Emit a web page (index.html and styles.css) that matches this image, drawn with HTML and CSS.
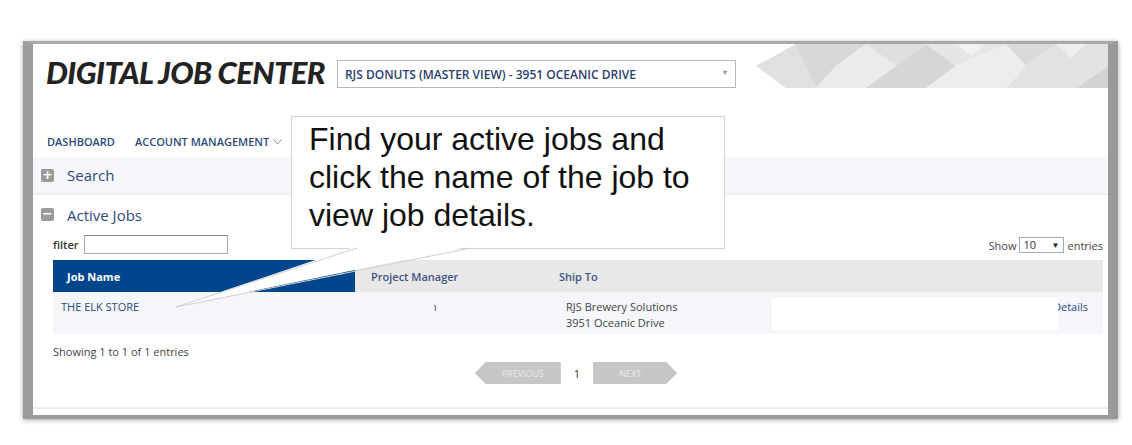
FILE: index.html
```html
<!DOCTYPE html>
<html lang="en">
<head>
  <meta charset="UTF-8">
  <title>Digital Job Center</title>
  <link rel="stylesheet" href="styles.css">
</head>
<body>
  <div class="frame">
    <header class="top">
      <h1 class="brand">DIGITAL JOB CENTER</h1>
      <div class="account-select">
        <span>RJS DONUTS (MASTER VIEW) - 3951 OCEANIC DRIVE</span>
        <span class="caret">&#9662;</span>
      </div>
      <svg class="pattern" width="352" height="44" viewBox="0 0 352 44">
        <polygon points="0,22 40,0 80,0 60,44 30,44" fill="#e0e0e0"/>
        <polygon points="40,0 110,0 80,22 60,44" fill="#d8d8d8"/>
        <polygon points="80,22 110,0 140,22 110,44 60,44" fill="#ebebeb"/>
        <polygon points="110,0 170,0 140,22" fill="#dedede"/>
        <polygon points="140,22 170,0 200,22 170,44 110,44" fill="#d6d6d6"/>
        <polygon points="170,0 250,0 200,22" fill="#e6e6e6"/>
        <polygon points="200,22 250,0 270,22 250,44 170,44" fill="#ededed"/>
        <polygon points="250,0 300,0 270,22" fill="#dadada"/>
        <polygon points="270,22 300,0 352,0 352,22 320,44 250,44" fill="#e2e2e2"/>
        <polygon points="320,44 352,22 352,44" fill="#d4d4d4"/>
        <polygon points="200,0 230,0 215,12" fill="#f1f1f1"/>
        <polygon points="300,0 330,0 315,14" fill="#efefef"/>
      </svg>
    </header>

    <nav class="menu">
      <a>DASHBOARD</a>
      <a>ACCOUNT MANAGEMENT
        <svg class="chev" width="9" height="6" viewBox="0 0 9 6"><polyline points="0.5,0.5 4.5,5 8.5,0.5" fill="none" stroke="#888" stroke-width="1"/></svg>
      </a>
    </nav>

    <div class="panel-bar search-bar">
      <span class="toggle">+</span>
      <span class="panel-title">Search</span>
    </div>

    <div class="panel-bar">
      <span class="toggle">&minus;</span>
      <span class="panel-title">Active Jobs</span>
    </div>

    <div class="jobs">
      <div class="tools">
        <label class="filter">filter <input type="text"></label>
        <div class="length">Show <span class="length-select">10 <span class="tri">&#9660;</span></span> entries</div>
      </div>

      <div class="table">
        <div class="th th-active">Job Name <span class="sort">&#8963;</span></div>
        <div class="th">Project Manager</div>
        <div class="th th-ship">Ship To</div>
        <div class="th"></div>

        <div class="td"><a class="job-link">THE ELK STORE</a></div>
        <div class="td td-pm">n</div>
        <div class="td td-ship">RJS Brewery Solutions<br>3951 Oceanic Drive</div>
        <div class="td td-details"><a>Details</a></div>
      </div>

      <div class="info">Showing 1 to 1 of 1 entries</div>

      <div class="pager">
        <span class="page-btn prev">PREVIOUS</span>
        <span class="page-num">1</span>
        <span class="page-btn next">NEXT</span>
      </div>
    </div>

    <div class="foot"></div>
  </div>

  <!-- redaction boxes and tutorial callout lie over the page -->
  <div class="redact redact-pm"></div>
  <div class="redact redact-row"></div>

  <div class="callout">Find your active jobs and<br>click the name of the job to<br>view job details.</div>
  <svg class="tail" width="1132" height="445" viewBox="0 0 1132 445">
    <polygon points="357,246 471,246 176,307" fill="#fff"/>
    <polyline points="357,248 176,307 471,248" fill="none" stroke="#cfcfcf" stroke-width="1"/>
  </svg>
</body>
</html>
```

FILE: styles.css
```css
* {
  box-sizing: border-box;
}

body {
  margin: 0;
  background: #fff;
  font-family: "Open Sans", Arial, sans-serif;
  color: #444;
  position: relative;
  width: 1132px;
  height: 445px;
  overflow: hidden;
}

a {
  color: #2c4a7a;
  text-decoration: none;
}

.frame {
  margin: 41px 0 0 23px;
  width: 1095px;
  height: 378px;
  border-style: solid;
  border-width: 3px 10px 4px 10px;
  border-color: #a9a9a9 #9a9a9a #9a9a9a #9c9c9c;
  box-shadow: 0 1px 5px rgba(0,0,0,0.35);
  background: #fff;
  display: flex;
  flex-direction: column;
}

.top {
  display: flex;
  align-items: flex-start;
  height: 44px;
}

.brand {
  margin: 10px 0 0 13px;
  font-family: Lato, "Open Sans", sans-serif;
  font-style: italic;
  font-weight: 900;
  font-size: 31px;
  line-height: 36px;
  letter-spacing: -0.6px;
  color: #232323;
  white-space: nowrap;
}

.account-select {
  margin: 16px 0 0 12px;
  width: 399px;
  height: 28px;
  border: 1px solid #b8b8b8;
  display: flex;
  align-items: center;
  justify-content: space-between;
  padding: 0 8px 0 7px;
  font-size: 12px;
  font-weight: 600;
  color: #2c3f6b;
}

.caret {
  color: #999;
  font-size: 8px;
  margin-top: -6px;
}

.pattern {
  margin-left: auto;
  display: block;
}

.menu {
  margin-top: 46px;
  padding-left: 14px;
  display: flex;
  gap: 20px;
  font-size: 11px;
  font-weight: 600;
  height: 23px;
}

.menu a {
  color: #2c4a7a;
}

.chev {
  margin-left: 1px;
  vertical-align: 1px;
}

.panel-bar {
  display: flex;
  align-items: center;
  height: 39px;
  padding-left: 8px;
  gap: 13px;
}

.search-bar {
  background: #f5f7fb;
  border-bottom: 2px solid #eceef1;
  height: 38px;
}

.toggle {
  width: 13px;
  height: 13px;
  background: #9a9a9a;
  color: #fff;
  border-radius: 2px;
  font-size: 13px;
  line-height: 12px;
  font-weight: 700;
  text-align: center;
  font-family: "DejaVu Sans", sans-serif;
}

.panel-title {
  font-size: 15px;
  color: #2c4a7a;
}

.jobs {
  padding: 0 5px 0 20px;
}

.tools {
  display: flex;
  justify-content: space-between;
  align-items: center;
  height: 20px;
  margin-top: 0;
}

.filter {
  font-size: 11px;
  font-weight: 600;
  color: #333;
  display: flex;
  align-items: center;
  gap: 5px;
}

.filter input {
  width: 144px;
  height: 19px;
  border: 1px solid #aaa;
  border-top-color: #888;
  margin: 0;
}

.length {
  font-size: 11px;
  color: #444;
  display: flex;
  align-items: center;
  gap: 3px;
  margin-top: 2px;
}

.length-select {
  width: 45px;
  height: 16px;
  border: 1px solid #aaa;
  padding-left: 3px;
  line-height: 14px;
  display: flex;
  justify-content: space-between;
  color: #333;
}

.tri {
  font-size: 8px;
  padding-right: 4px;
  color: #222;
}

.table {
  margin-top: 6px;
  display: grid;
  grid-template-columns: 302px 190px 300px 1fr;
  font-size: 11px;
}

.th {
  height: 32px;
  background: #e8e8e8;
  color: #3d5682;
  font-weight: 600;
  padding-left: 16px;
  display: flex;
  align-items: center;
}

.th-active {
  background: #00468c;
  color: #fff;
  font-weight: 700;
  padding-left: 14px;
  justify-content: space-between;
  padding-right: 10px;
}

.th-ship {
  padding-left: 14px;
}

.sort {
  color: #6f8fb8;
  font-size: 12px;
}

.td {
  height: 42px;
  background: #f4f6f9;
  padding: 7px 8px 0;
  line-height: 16px;
  color: #444;
}

.td-pm {
  padding-left: 75px;
  color: #555;
}

.td-ship {
  padding-left: 21px;
}

.td-details {
  text-align: right;
  padding-right: 15px;
}

.job-link {
  color: #2c4a7a;
}

.info {
  margin-top: 10px;
  font-size: 11px;
  color: #444;
}

.pager {
  display: flex;
  justify-content: center;
  align-items: center;
  gap: 13px;
  margin-top: 3px;
  margin-left: -4px;
}

.page-btn {
  width: 86px;
  height: 22px;
  background: #c6c6c6;
  color: #eaeaea;
  font-size: 9px;
  display: flex;
  align-items: center;
  justify-content: center;
}

.prev {
  clip-path: polygon(11px 0, 100% 0, 100% 100%, 11px 100%, 0 50%);
  padding-left: 10px;
}

.next {
  width: 84px;
  clip-path: polygon(0 0, 73px 0, 100% 50%, 73px 100%, 0 100%);
  padding-right: 10px;
}

.page-num {
  font-size: 11px;
  color: #333;
}

.foot {
  margin-top: auto;
  height: 8px;
  border-top: 2px solid #eeeeee;
}

.redact {
  position: absolute;
  background: #fff;
}

.redact-pm {
  left: 380px;
  top: 298px;
  width: 54px;
  height: 22px;
  background: #f4f6f9;
}

.redact-row {
  left: 772px;
  top: 298px;
  width: 286px;
  height: 32px;
}

.tail {
  position: absolute;
  left: 0;
  top: 0;
}

.callout {
  position: absolute;
  left: 291px;
  top: 116px;
  width: 434px;
  height: 133px;
  background: #fff;
  border: 1px solid #d4d4d4;
  padding: 3px 0 0 17px;
  font-family: "Liberation Sans", Arial, sans-serif;
  font-size: 32px;
  line-height: 38px;
  color: #111;
  white-space: nowrap;
}
```
